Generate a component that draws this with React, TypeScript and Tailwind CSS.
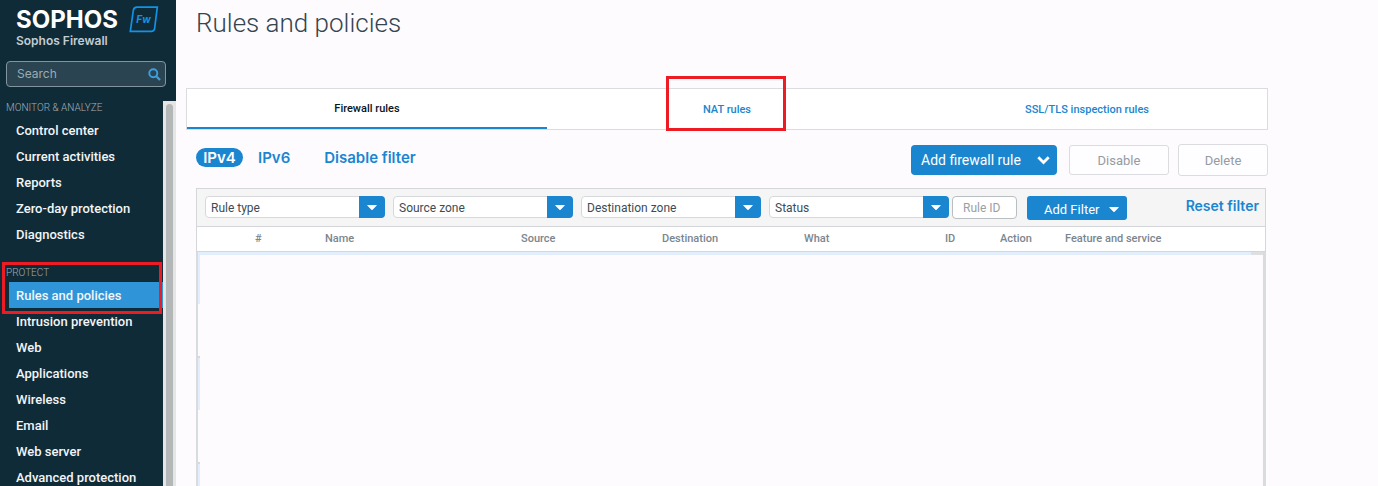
import React from "react";

const analyzeItems = ["Control center", "Current activities", "Reports", "Zero-day protection", "Diagnostics"];
const protectItems = [
  "Rules and policies",
  "Intrusion prevention",
  "Web",
  "Applications",
  "Wireless",
  "Email",
  "Web server",
  "Advanced protection",
];
const filters = ["Rule type", "Source zone", "Destination zone", "Status"];
const columns = [
  { label: "#", className: "w-[128px] pl-[58px]" },
  { label: "Name", className: "w-[196px]" },
  { label: "Source", className: "w-[141px]" },
  { label: "Destination", className: "w-[142px]" },
  { label: "What", className: "w-[141px]" },
  { label: "ID", className: "w-[55px]" },
  { label: "Action", className: "w-[65px]" },
  { label: "Feature and service", className: "" },
];

function Caret() {
  return (
    <svg width="10" height="5" viewBox="0 0 10 5" aria-hidden="true">
      <path d="M0.6 0h8.8q.6.3.1.8L5.6 4.7q-.6.5-1.2 0L.5.8Q0 .3.600 0z" fill="#fff" />
    </svg>
  );
}

function ProductBadge() {
  return (
    <svg width="30" height="27" viewBox="0 0 30 27" aria-hidden="true">
      <path
        d="M8 1.200H28.300L25.600 22.500Q25.200 25.400 22.200 25.400H1.300L4.300 4.500Q4.800 1.200 8 1.200Z"
        fill="none"
        stroke="#1093e8"
        strokeWidth="1.700"
      />
      <text
        x="14.500"
        y="17"
        textAnchor="middle"
        fontFamily="Inter, sans-serif"
        fontSize="10"
        fontWeight="700"
        fontStyle="italic"
        fill="#1093e8"
      >
        Fw
      </text>
    </svg>
  );
}

function NavLink({ label, active = false }: { label: string; active?: boolean }) {
  return (
    <li className={active ? "ml-[9px] bg-[#2f95d8]" : "ml-[9px]"}>
      <a
        href="#"
        aria-current={active ? "page" : undefined}
        className="block h-[26px] pl-[7px] font-[Roboto] text-[13px] leading-[28px] font-medium whitespace-nowrap text-[#f2f5f7]"
      >
        {label}
      </a>
    </li>
  );
}

function Sidebar() {
  const heading = "pl-[6px] font-[Roboto] text-[10px] leading-[14px] font-light text-[#a3adb3]";
  return (
    <aside className="flex w-[176px] shrink-0 flex-col bg-[#102b38]">
      <header className="px-[6px] pt-[6px]">
        <div className="flex items-start gap-[7px] pl-[10px]">
          <div>
            <div className="w-[106px] text-[24px] leading-[28px] font-bold text-white">SOPHOS</div>
            <div className="text-[12px] leading-[14px] font-semibold text-[#c3ccd2]">Sophos Firewall</div>
          </div>
          <ProductBadge />
        </div>
        <div className="mt-[13px] mr-[4px] flex h-[26px] items-center rounded border border-[#84949c] bg-[#2a4451] pr-[4px] pl-[10px]">
          <input
            aria-label="Search"
            placeholder="Search"
            className="min-w-0 flex-1 bg-transparent text-[12px] text-white outline-none placeholder:text-[#9eabb2]"
          />
          <svg width="13" height="13" viewBox="0 0 13 13" fill="none" stroke="#3d9fe0" aria-hidden="true">
            <circle cx="5.300" cy="5.300" r="4" strokeWidth="1.900" />
            <path d="M8.500 8.500l3.500 3.500" strokeWidth="2.300" />
          </svg>
        </div>
      </header>
      <div className="mt-[14px] flex min-h-0 flex-1">
        <nav className="min-w-0 flex-1">
          <section>
            <h2 className={heading}>MONITOR &amp; ANALYZE</h2>
            <ul className="mt-[2px]">
              {analyzeItems.map((label) => (
                <NavLink key={label} label={label} />
              ))}
            </ul>
          </section>
          <section className="relative mt-[19px]">
            <h2 className={heading}>PROTECT</h2>
            <ul className="mt-[2px]">
              {protectItems.map((label) => (
                <NavLink key={label} label={label} active={label === "Rules and policies"} />
              ))}
            </ul>
            <div className="pointer-events-none absolute -top-[4px] right-[1px] left-[2px] h-[52px] border-[3px] border-[#ed1c24]" />
          </section>
        </nav>
        <div className="w-[13px] bg-[#e6e5e6] px-[3px] pt-[3px]">
          <div className="h-full rounded-t-full bg-[#b4b7b7]" />
        </div>
      </div>
    </aside>
  );
}

function Tabs() {
  const tab = "relative flex items-center justify-center font-[Roboto] text-[11px] font-medium";
  return (
    <div role="tablist" className="mt-[48px] ml-[10px] grid h-[42px] grid-cols-3 border border-[#dcdbdf] bg-white">
      <button role="tab" aria-selected="true" className={tab + " border-b-2 border-[#1a86d0] pt-[3px] text-[#08151c]"}>
        Firewall rules
      </button>
      <button role="tab" aria-selected="false" className={tab + " pt-[2px] text-[#1a86d0]"}>
        NAT rules
        <span className="pointer-events-none absolute -top-[13px] right-[121px] -bottom-[2px] left-[119px] border-[3px] border-[#ed1c24]" />
      </button>
      <button role="tab" aria-selected="false" className={tab + " pt-[2px] text-[#1a86d0]"}>
        SSL/TLS inspection rules
      </button>
    </div>
  );
}

function Toolbar() {
  return (
    <div className="mt-[14px] ml-[20px] flex h-[32px] items-start">
      <div className="flex items-center pt-[4px] text-[15px] leading-[19px] font-semibold text-[#1a86d0]">
        <button className="w-[47px] rounded-full bg-[#1a86d0] text-center text-white">IPv4</button>
        <button className="ml-[15px]">IPv6</button>
        <button className="ml-[34px]">Disable filter</button>
      </div>
      <div className="ml-auto flex items-center font-[Roboto]">
        <button className="flex h-[30px] w-[146px] items-center justify-between rounded bg-[#1a86d0] pr-[7px] pl-[10px] text-[14px] text-white">
          Add firewall rule
          <svg width="13" height="9" viewBox="0 0 13 9" fill="none" stroke="#fff" strokeWidth="2.800" aria-hidden="true">
            <path d="M1.300 1.300L6.500 6.500L11.700 1.300" />
          </svg>
        </button>
        <button disabled className="ml-[12px] h-[30px] w-[100px] rounded-[3px] border border-[#dcdbdf] bg-[#fefdff] pt-[2px] text-[13px] text-[#979b9f]">
          Disable
        </button>
        <button disabled className="ml-[9px] h-[32px] w-[90px] rounded-[3px] border border-[#dcdbdf] bg-[#fefdff] pt-[2px] text-[13px] text-[#979b9f]">
          Delete
        </button>
      </div>
    </div>
  );
}

function FilterSelect({ label }: { label: string }) {
  return (
    <label className="grid h-[22px] w-[180px] grid-cols-[1fr_26px]">
      <select
        aria-label={label}
        className="col-span-2 col-start-1 row-start-1 appearance-none rounded border border-[#d6d8db] bg-white pt-[2px] pl-[5px] text-[12px] text-[#3b4c56]"
      >
        <option>{label}</option>
      </select>
      <span className="pointer-events-none col-start-2 row-start-1 flex items-center justify-center rounded-r bg-[#1a86d0]">
        <Caret />
      </span>
    </label>
  );
}

function RulesPanel() {
  return (
    <section className="mt-[12px] mr-[2px] ml-[20px] flex min-h-0 flex-1 flex-col">
      <div className="border border-[#d5d6d9]">
        <div className="flex h-[38px] items-start border-b border-[#d5d6d9] bg-[#f5f5f5] pt-[7px] pr-[6px] pl-[8px] font-[Roboto]">
          <div className="flex gap-[8px]">
            {filters.map((label) => (
              <FilterSelect key={label} label={label} />
            ))}
          </div>
          <input
            aria-label="Rule ID"
            placeholder="Rule ID"
            className="ml-[3px] h-[23px] w-[65px] rounded border border-[#b9bec3] bg-white pl-[10px] text-[12px] placeholder:text-[#9a9fa4]"
          />
          <button className="ml-[10px] flex h-[24px] w-[100px] items-center justify-between rounded-[3px] bg-[#1a86d0] pt-[3px] pr-[8px] pl-[17px] text-[13px] leading-[20px] whitespace-nowrap text-white">
            Add Filter
            <Caret />
          </button>
          <button className="ml-auto font-[Inter] text-[14px] leading-[20px] font-semibold text-[#1a86d0]">Reset filter</button>
        </div>
        <table className="w-full table-fixed bg-white">
          <thead>
            <tr>
              {columns.map(({ label, className }) => (
                <th key={label} scope="col" className={"h-[24px] p-0 text-left font-[Roboto] text-[11px] leading-[22px] font-medium text-[#7b868e] " + className}>
                  {label}
                </th>
              ))}
            </tr>
          </thead>
        </table>
      </div>
      <div className="flex min-h-0 flex-1 border-r-[3px] border-l-2 border-[#dadbdc]">
        <div className="w-[2px] overflow-hidden">
          {[0, 1, 2].map((row) => (
            <div key={row} className="flex h-[106px] flex-col border-b-2 border-[#d8d9da]">
              <div className="h-[52px] bg-[#e2eefb]" />
              <div className="flex-1 bg-[#fafcff]" />
            </div>
          ))}
        </div>
        <div className="flex h-[3px] flex-1">
          <div className="flex-1 bg-[#e2eefb]" />
          <div className="w-[12px] bg-[#dedfe1]" />
        </div>
      </div>
    </section>
  );
}

export default function App() {
  return (
    <div className="flex h-screen overflow-hidden bg-[#fefbff] font-[Inter]">
      <Sidebar />
      <main className="mr-[110px] flex min-w-[1000px] flex-1 flex-col">
        <h1 className="mt-[6px] ml-[20px] font-[Roboto] text-[26px] leading-[34px] font-light text-[#34454f]">Rules and policies</h1>
        <Tabs />
        <Toolbar />
        <RulesPanel />
      </main>
    </div>
  );
}
